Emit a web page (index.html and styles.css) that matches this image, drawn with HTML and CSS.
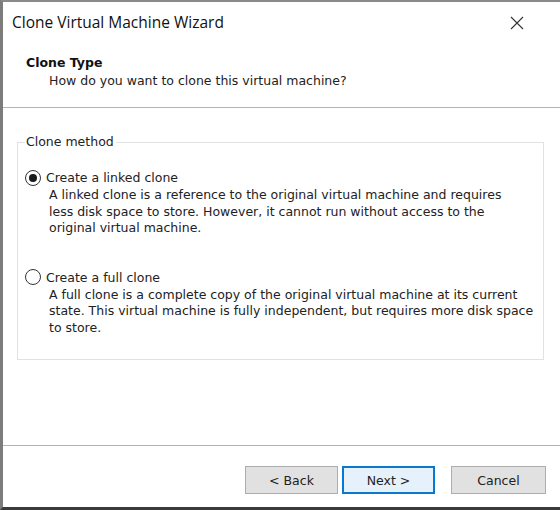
FILE: index.html
```html
<!DOCTYPE html>
<html lang="en">
<head>
  <meta charset="UTF-8" />
  <title>Clone Virtual Machine Wizard</title>
  <link rel="stylesheet" href="styles.css">
</head>
<body>

<div class="window">
  <div class="titlebar">
    <span class="title">Clone Virtual Machine Wizard</span>
    <svg class="close" width="14" height="14" viewBox="0 0 14 14">
      <path d="M1 1 L13 13 M13 1 L1 13" stroke="#333" stroke-width="1.1" fill="none"/>
    </svg>
  </div>

  <div class="header">
    <div class="step-title">Clone Type</div>
    <div class="step-sub">How do you want to clone this virtual machine?</div>
  </div>

  <div class="body">
    <fieldset class="group">
      <legend>Clone method</legend>

      <div class="option">
        <div class="option-row">
          <span class="radio checked"></span>
          <span>Create a linked clone</span>
        </div>
        <div class="option-desc">A linked clone is a reference to the original virtual machine and requires<br>less disk space to store. However, it cannot run without access to the<br>original virtual machine.</div>
      </div>

      <div class="option">
        <div class="option-row">
          <span class="radio"></span>
          <span>Create a full clone</span>
        </div>
        <div class="option-desc">A full clone is a complete copy of the original virtual machine at its current<br>state. This virtual machine is fully independent, but requires more disk space<br>to store.</div>
      </div>
    </fieldset>
  </div>

  <div class="footer">
    <button class="btn">&lt; Back</button>
    <button class="btn primary">Next &gt;</button>
    <button class="btn cancel">Cancel</button>
  </div>
</div>

</body>
</html>
```

FILE: styles.css
```css
html, body {
  margin: 0;
  height: 100%;
  background: #fff;
}
body {
  font-family: 'DejaVu Sans', Verdana, sans-serif;
  font-size: 12.5px;
  color: #222;
}
.window {
  box-sizing: border-box;
  height: 510px;
  width: 560px;
  display: flex;
  flex-direction: column;
  border-top: 2px solid #8a8a8a;
  border-left: 3px solid #7c7c7c;
  border-bottom: 3px solid #3a3a3a;
  background: #fff;
}
.titlebar {
  height: 42px;
  display: flex;
  align-items: flex-start;
  justify-content: space-between;
  padding: 10px 0 0 9px;
  box-sizing: border-box;
}
.title {
  font-family: 'Open Sans', 'Noto Sans', sans-serif;
  font-size: 15.5px;
  line-height: 20px;
  color: #111;
}
.close {
  margin: 4px 36px 0 0;
}
.header {
  padding: 10px 0 18px 23px;
  border-bottom: 1px solid #b4b4b4;
  line-height: 17px;
}
.step-title {
  font-weight: bold;
  color: #111;
}
.step-sub {
  padding-left: 23px;
  margin-top: 1px;
}
.body {
  flex: 1;
  padding: 26px 14px 0 14px;
}
.group {
  margin: 0;
  width: 527px;
  box-sizing: border-box;
  border: 1px solid #e2e2e2;
  padding: 19px 4px 23px 7px;
}
.group legend {
  padding: 0 2px 0 1px;
  line-height: 16px;
}
.option + .option {
  margin-top: 32px;
}
.option-row {
  display: flex;
  align-items: center;
  gap: 5px;
  line-height: 17px;
}
.radio {
  width: 14px;
  height: 14px;
  border: 1px solid #333;
  border-radius: 50%;
  box-sizing: content-box;
  display: flex;
  align-items: center;
  justify-content: center;
}
.radio.checked::after {
  content: "";
  width: 8px;
  height: 8px;
  border-radius: 50%;
  background: #1a1a1a;
}
.option-desc {
  margin: 1px 0 0 24px;
  line-height: 16.5px;
  white-space: nowrap;
}
.footer {
  height: 62px;
  box-sizing: border-box;
  border-top: 1px solid #b4b4b4;
  padding: 20px 14px 0 0;
  display: flex;
  justify-content: flex-end;
  align-items: flex-start;
  gap: 4px;
}
.btn {
  width: 93px;
  height: 28px;
  font-family: 'DejaVu Sans', Verdana, sans-serif;
  font-size: 12.5px;
  color: #222;
  background: #e1e1e1;
  border: 1px solid #adadad;
  padding: 0;
}
.btn.primary {
  border: 2px solid #0a78d0;
  background: #e5f1fb;
}
.btn.cancel {
  margin-left: 12px;
  width: 95px;
}
```
